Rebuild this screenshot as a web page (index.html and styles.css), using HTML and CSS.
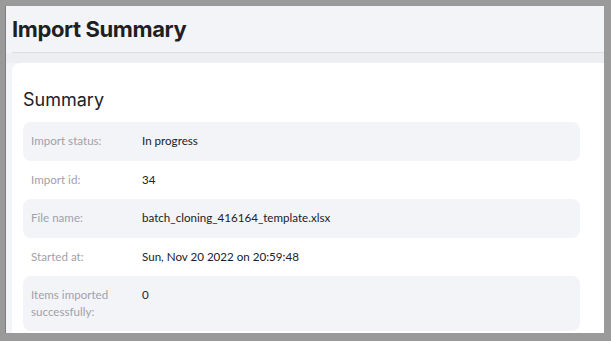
FILE: index.html
```html
<!DOCTYPE html>
<html>
<head>
<meta charset="utf-8">
<link rel="stylesheet" href="styles.css">
</head>
<body>
<div class="frame">
  <header class="page-header">
    <h1 class="page-title">Import Summary</h1>
  </header>
  <main class="content">
    <section class="card">
      <h2 class="card-title">Summary</h2>
      <dl class="summary">
        <div class="row shaded"><dt>Import status:</dt><dd>In progress</dd></div>
        <div class="row"><dt>Import id:</dt><dd>34</dd></div>
        <div class="row shaded"><dt>File name:</dt><dd>batch_cloning_416164_template.xlsx</dd></div>
        <div class="row"><dt>Started at:</dt><dd>Sun, Nov 20 2022 on 20:59:48</dd></div>
        <div class="row shaded"><dt>Items imported successfully:</dt><dd>0</dd></div>
      </dl>
    </section>
  </main>
</div>
</body>
</html>
```
FILE: styles.css
```css
html, body {
  margin: 0;
  padding: 0;
}
body {
  background: #9a9a9a;
  font-family: Inter, "Noto Sans", sans-serif;
  height: 100vh;
  box-sizing: border-box;
  padding: 6px 7px 8px 5px;
  overflow: hidden;
}
.frame {
  height: 100%;
  background: #f3f4f8;
  border-left: 1px solid #7d7d7d;
  overflow: hidden;
  display: flex;
  flex-direction: column;
}
.page-header {
  margin-left: 6px;
  height: 46px;
  flex: none;
  border-bottom: 1px solid #dcdde2;
  display: flex;
  align-items: center;
  box-shadow: 0 1px 0 #e6e7ec;
}
.page-title {
  margin: 0;
  font-size: 22px;
  font-weight: 700;
  color: #1f1f22;
  letter-spacing: -0.4px;
}
.content {
  flex: 1;
  background: linear-gradient(#eceef2, #eceef2) no-repeat 0 0 / 100% 10px, #f3f4f8;
  padding: 10px 0 0 6px;
}
.card {
  background: #fff;
  border-radius: 8px 0 0 0;
  height: 100%;
  padding: 0 24px 0 11px;
}
.card-title {
  margin: 0;
  padding: 25px 0 10px;
  font-size: 18px;
  line-height: 24px;
  font-weight: 400;
  color: #222226;
}
.summary {
  margin: 0;
}
.row {
  display: grid;
  grid-template-columns: 119px 1fr;
  padding: 11px 0;
  border-radius: 8px;
  font-family: Lato, Inter, sans-serif;
  font-size: 11.6px;
  line-height: 16.5px;
}
.row.shaded {
  background: #f3f4f8;
}
.row dt {
  padding: 0 18px 0 8px;
  color: #9fa1ab;
}
.row dd {
  margin: 0;
  color: #222226;
}
```
